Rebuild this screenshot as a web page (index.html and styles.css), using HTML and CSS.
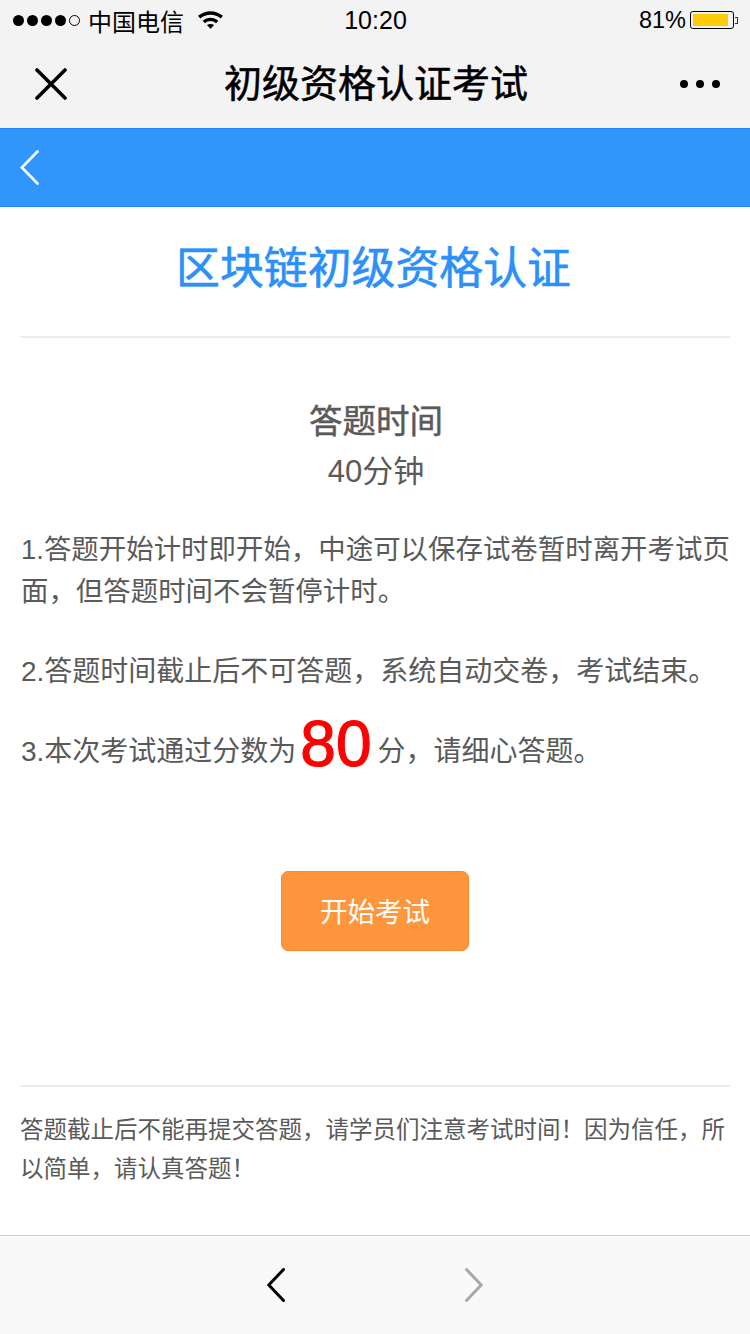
FILE: index.html
```html
<!DOCTYPE html>
<html lang="zh-CN">
<head>
    <meta charset="UTF-8">
    <meta name="viewport" content="width=device-width, initial-scale=1.0">
    <title>初级资格认证考试</title>
    <link rel="stylesheet" href="styles.css">
</head>
<body>

<div class="phone">
    <div class="status-bar">
        <div class="status-left">
            <span class="signal">
                <i class="dot"></i><i class="dot"></i><i class="dot"></i><i class="dot"></i><i class="dot empty"></i>
            </span>
            <span class="carrier">中国电信</span>
            <svg class="wifi" width="25" height="18" viewBox="1 2 24 17">
                <path d="M1 6.5C8 0.5 18 0.5 25 6.5L22.8 9C17 4.2 9 4.2 3.2 9Z" fill="#000"/>
                <path d="M5.5 11.2C10 7.4 16 7.4 20.5 11.2L18.3 13.6C15 10.9 11 10.9 7.7 13.6Z" fill="#000"/>
                <path d="M9.6 15.4C11.6 13.9 14.4 13.9 16.4 15.4L13 19Z" fill="#000"/>
            </svg>
        </div>
        <div class="status-time">10:20</div>
        <div class="status-right">
            <span class="percent">81%</span>
            <span class="battery"><span class="battery-level"></span></span>
            <span class="battery-tip"></span>
        </div>
    </div>

    <div class="nav-bar">
        <svg class="nav-close" width="32" height="32" viewBox="0 0 32 32">
            <path d="M2 2L30 30M30 2L2 30" stroke="#000" stroke-width="3.6" stroke-linecap="round"/>
        </svg>
        <div class="nav-title">初级资格认证考试</div>
        <div class="nav-more"><i></i><i></i><i></i></div>
    </div>

    <div class="blue-bar">
        <svg class="back" width="19" height="35" viewBox="0 0 19 35">
            <path d="M17.5 1.5L1.8 17.5L17.5 33.5" fill="none" stroke="#fff" stroke-width="2.6" stroke-linecap="round"/>
        </svg>
    </div>

    <div class="content">
        <h1 class="exam-title">区块链初级资格认证</h1>

        <div class="time-box">
            <div class="time-label">答题时间</div>
            <div class="time-value">40分钟</div>
        </div>

        <div class="rules">
            <p class="rule rule-first">1.答题开始计时即开始，中途可以保存试卷暂时离开考试页面，但答题时间不会暂停计时。</p>
            <p class="rule rule-second">2.答题时间截止后不可答题，系统自动交卷，考试结束。</p>
            <p class="rule rule-third">3.本次考试通过分数为<span class="score">80</span>分，请细心答题。</p>
        </div>

        <div class="start-wrap">
            <button class="start-btn">开始考试</button>
        </div>

        <p class="footer-note">答题截止后不能再提交答题，请学员们注意考试时间！因为信任，所以简单，请认真答题！</p>
    </div>

    <div class="toolbar">
        <svg width="18" height="34" viewBox="0 0 18 34">
            <path d="M16.5 1.5L1.8 17L16.5 32.5" fill="none" stroke="#000" stroke-width="3" stroke-linecap="round"/>
        </svg>
        <svg width="18" height="34" viewBox="0 0 18 34">
            <path d="M1.5 1.5L16.2 17L1.5 32.5" fill="none" stroke="#a8a8a8" stroke-width="3" stroke-linecap="round"/>
        </svg>
    </div>
</div>

</body>
</html>
```

FILE: styles.css
```css
* {
    box-sizing: border-box;
}
body {
    margin: 0;
    font-family: "Liberation Sans", "Noto Sans CJK SC", sans-serif;
    background-color: #fff;
    color: #5a5a5a;
}
.phone {
    width: 750px;
    height: 1334px;
    display: flex;
    flex-direction: column;
    overflow: hidden;
}

/* status bar */
.status-bar {
    height: 40px;
    background-color: #f3f3f3;
    color: #000;
    display: flex;
    align-items: center;
    justify-content: space-between;
    padding: 0 12px 0 13px;
    position: relative;
}
.status-left,
.status-right {
    display: flex;
    align-items: center;
}
.signal {
    display: flex;
    gap: 3px;
}
.dot {
    width: 11px;
    height: 11px;
    border-radius: 50%;
    background-color: #000;
}
.dot.empty {
    background-color: transparent;
    border: 1px solid #000;
}
.carrier {
    font-size: 24px;
    margin-left: 8px;
}
.wifi {
    margin-left: 14px;
}
.status-time {
    position: absolute;
    left: 1px;
    right: 0;
    text-align: center;
    font-size: 25px;
}
.percent {
    font-size: 23.5px;
    margin-right: 4px;
}
.battery {
    width: 44px;
    height: 18px;
    border: 1px solid #000;
    border-radius: 3px;
    padding: 2px;
    display: flex;
}
.battery-level {
    width: 35px;
    background-color: #ffcc0a;
}
.battery-tip {
    width: 3px;
    height: 7px;
    border: 1px solid #333;
    border-left: none;
    margin-left: 1px;
}

/* nav */
.nav-bar {
    height: 88px;
    background-color: #f3f3f3;
    display: flex;
    align-items: center;
    justify-content: space-between;
    padding: 0 30px 0 35px;
}
.nav-title {
    font-size: 38px;
    line-height: 44px;
    margin-left: 5px;
    color: #000;
    -webkit-text-stroke: 0.5px #000;
}
.nav-more {
    display: flex;
    gap: 8px;
}
.nav-more i {
    width: 8px;
    height: 8px;
    border-radius: 50%;
    background-color: #000;
}
.blue-bar {
    height: 79px;
    background-color: #3096fc;
    border-top: 1px solid #1a88fa;
    border-bottom: 1px solid #1a88fa;
    display: flex;
    align-items: center;
    padding-left: 20px;
}

/* content */
.content {
    flex: 1;
    padding: 0 20px;
    display: flex;
    flex-direction: column;
}
.exam-title {
    margin: 0;
    height: 131px;
    padding: 32px 3px 0 0;
    text-align: center;
    font-size: 43.9px;
    line-height: 60px;
    font-weight: 400;
    color: #2b90fa;
    -webkit-text-stroke: 0.6px #2b90fa;
    border-bottom: 2px solid #ececec;
}
.time-box {
    text-align: center;
    padding: 60px 0 0 2px;
}
.time-label {
    font-size: 33.5px;
    line-height: 48px;
    -webkit-text-stroke: 0.5px #5a5a5a;
}
.time-value {
    font-size: 31px;
    line-height: 44px;
    margin-top: 4px;
}
.rules {
    margin-top: 35px;
    margin-left: 1px;
    margin-right: -4px;
}
.rule {
    margin: 0;
    font-size: 28px;
    line-height: 42px;
}
.rule-first {
    font-size: 27.45px;
}
.rule-second {
    margin-top: 38px;
}
.rule-third {
    margin-top: 19px;
    line-height: 70px;
}
.score {
    font-size: 64px;
    line-height: 1;
    vertical-align: -5px;
    color: #fe0000;
    -webkit-text-stroke: 1.2px #fe0000;
    margin: 0 6px 0 4px;
}
.start-wrap {
    margin-top: 84px;
    display: flex;
    justify-content: center;
}
.start-btn {
    width: 188px;
    height: 80px;
    background-color: #ff953c;
    border: 1px solid #f78a2c;
    border-radius: 7px;
    color: #fff;
    font-family: inherit;
    font-size: 27.5px;
    padding-bottom: 3px;
}
.footer-note {
    margin: 134px 0 0;
    padding-top: 24px;
    border-top: 2px solid #ececec;
    font-size: 23.5px;
    line-height: 39px;
}

/* bottom toolbar */
.toolbar {
    height: 99px;
    background-color: #f9f9f9;
    border-top: 1px solid #cfcfcf;
    display: flex;
    align-items: center;
    justify-content: center;
    gap: 180px;
}
```
